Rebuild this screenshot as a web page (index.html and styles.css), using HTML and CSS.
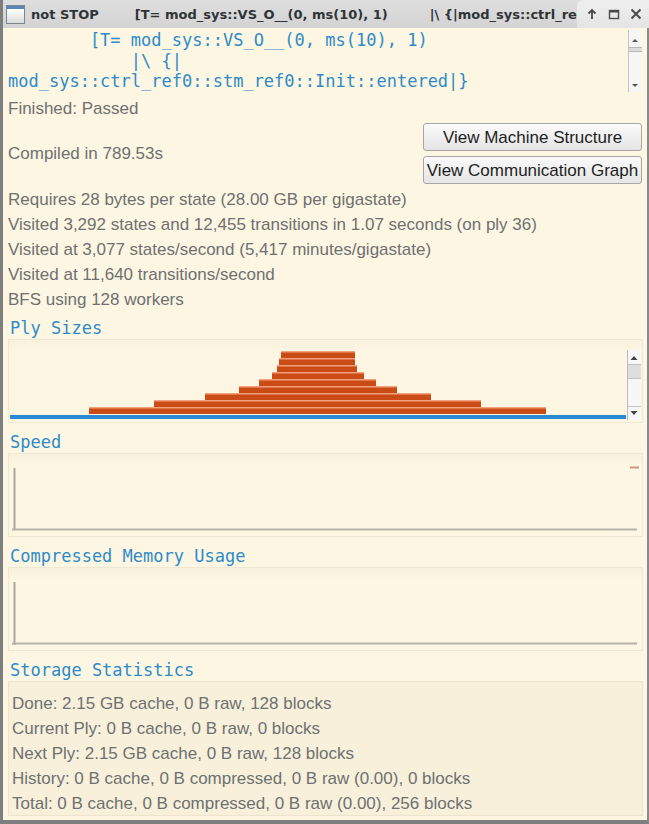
FILE: index.html
```html
<!DOCTYPE html>
<html>
<head>
<meta charset="utf-8">
<link rel="stylesheet" href="styles.css">
</head>
<body>
<div class="window">
  <div class="titlebar">
    <svg class="app-icon" viewBox="0 0 19 19">
      <rect x="0.5" y="0.5" width="18" height="18" fill="#f4f4f4" stroke="#7a8590"/>
      <rect x="1" y="1" width="17" height="3" fill="#5b86b8"/>
      <rect x="1" y="4" width="17" height="14" fill="url(#g)"/>
      <defs><linearGradient id="g" x1="0" y1="0" x2="0" y2="1"><stop offset="0" stop-color="#ffffff"/><stop offset="1" stop-color="#dcdcdc"/></linearGradient></defs>
    </svg>
    <div class="title"><span>not STOP</span><span class="t2">[T= mod_sys::VS_O__(0, ms(10), 1)</span><span class="t3">|\ {|mod_sys::ctrl_ref0::stm_ref0::Init::entered|}</span></div>
    <div class="wm">
      <svg viewBox="0 0 12 12"><path d="M6 2 L6 11 M2.5 5.5 L6 2 L9.5 5.5" fill="none" stroke="#4a4a4a" stroke-width="1.8"/></svg>
      <svg viewBox="0 0 12 12"><rect x="1.5" y="2.5" width="9" height="8" fill="none" stroke="#4a4a4a" stroke-width="1.4"/><rect x="1.5" y="2.5" width="9" height="2" fill="#4a4a4a"/></svg>
      <svg viewBox="0 0 12 12"><path d="M1.5 1.5 L10.5 10.5 M10.5 1.5 L1.5 10.5" fill="none" stroke="#4a4a4a" stroke-width="2"/></svg>
    </div>
  </div>
  <div class="content">
    <div class="statebox">
      <pre class="state">        [T= mod_sys::VS_O__(0, ms(10), 1)
            |\ {|
mod_sys::ctrl_ref0::stm_ref0::Init::entered|}</pre>
      <svg class="vscroll vs-state" viewBox="0 0 14 62">
        <rect x="0" y="0" width="14" height="62" fill="#f6f6f6"/>
        <line x1="0.5" y1="0" x2="0.5" y2="62" stroke="#c4c4c4"/>
        <path d="M4 12 L7 9 L10 12 Z" fill="#555"/>
        <rect x="1" y="17" width="13" height="5" fill="#dcdcdc"/>
        <line x1="1" y1="17.5" x2="14" y2="17.5" stroke="#b8b8b8"/>
        <line x1="1" y1="21.5" x2="14" y2="21.5" stroke="#b8b8b8"/>
        <path d="M4 54 L7 57 L10 54 Z" fill="#555"/>
      </svg>
    </div>
    <div class="line first">Finished: Passed</div>
    <div class="compile-row">
      <div>Compiled in 789.53s</div>
      <div class="buttons">
        <button class="btn">View Machine Structure</button>
        <button class="btn">View Communication Graph</button>
      </div>
    </div>
    <div class="lines">
      <div class="line">Requires 28 bytes per state (28.00 GB per gigastate)</div>
      <div class="line">Visited 3,292 states and 12,455 transitions in 1.07 seconds (on ply 36)</div>
      <div class="line">Visited at 3,077 states/second (5,417 minutes/gigastate)</div>
      <div class="line">Visited at 11,640 transitions/second</div>
      <div class="line">BFS using 128 workers</div>
    </div>

    <h2 class="sect top">Ply Sizes</h2>
    <div class="frame ply">
      <svg class="ply-chart" viewBox="0 0 616 70">
        <g class="bars">
          <rect x="79" y="58" width="457" height="6"/>
          <rect x="144" y="51" width="327" height="6"/>
          <rect x="195" y="44" width="226" height="6"/>
          <rect x="229" y="37" width="158" height="6"/>
          <rect x="249" y="30" width="117" height="6"/>
          <rect x="262" y="23" width="92" height="6"/>
          <rect x="267" y="16" width="80" height="6"/>
          <rect x="269" y="9" width="76" height="6"/>
          <rect x="271" y="2" width="74" height="6"/>
        </g>
        <g class="hl">
          <rect x="79" y="57" width="457" height="1.5"/>
          <rect x="144" y="50" width="327" height="1.5"/>
          <rect x="195" y="43" width="226" height="1.5"/>
          <rect x="229" y="36" width="158" height="1.5"/>
          <rect x="249" y="29" width="117" height="1.5"/>
          <rect x="262" y="22" width="92" height="1.5"/>
          <rect x="267" y="15" width="80" height="1.5"/>
          <rect x="269" y="8" width="76" height="1.5"/>
          <rect x="271" y="1" width="74" height="1.5"/>
        </g>
        <rect x="0" y="65" width="616" height="4" fill="#268bd2"/>
      </svg>
      <svg class="vscroll vs-ply" viewBox="0 0 14 70">
        <rect x="0" y="0" width="14" height="70" fill="#f7f7f7"/>
        <line x1="0.5" y1="0" x2="0.5" y2="70" stroke="#bdbdbd"/>
        <path d="M3.5 10 L7 6 L10.5 10 Z" fill="#444"/>
        <rect x="1" y="14" width="13" height="15" fill="#dedede"/>
        <line x1="1" y1="14.5" x2="14" y2="14.5" stroke="#c4c4c4"/>
        <line x1="1" y1="28.5" x2="14" y2="28.5" stroke="#c4c4c4"/>
        <line x1="1" y1="56.5" x2="14" y2="56.5" stroke="#c4c4c4"/>
        <path d="M3.5 61 L7 65 L10.5 61 Z" fill="#444"/>
      </svg>
    </div>

    <h2 class="sect">Speed</h2>
    <div class="frame graph">
      <svg class="axes" viewBox="0 0 633 82">
        <line x1="5.5" y1="14" x2="5.5" y2="76" stroke="#a9a9a0" stroke-width="2"/>
        <line x1="3" y1="75.5" x2="628" y2="75.5" stroke="#b3b3aa" stroke-width="2"/>
        <line x1="621" y1="13.5" x2="630" y2="13.5" stroke="#c99a7c" stroke-width="2"/>
      </svg>
    </div>

    <h2 class="sect">Compressed Memory Usage</h2>
    <div class="frame graph">
      <svg class="axes" viewBox="0 0 633 82">
        <line x1="5.5" y1="14" x2="5.5" y2="77" stroke="#a9a9a0" stroke-width="2"/>
        <line x1="3" y1="75.5" x2="628" y2="75.5" stroke="#b3b3aa" stroke-width="2"/>
      </svg>
    </div>

    <h2 class="sect">Storage Statistics</h2>
    <div class="frame storage">
      <div class="line">Done: 2.15 GB cache, 0 B raw, 128 blocks</div>
      <div class="line">Current Ply: 0 B cache, 0 B raw, 0 blocks</div>
      <div class="line">Next Ply: 2.15 GB cache, 0 B raw, 128 blocks</div>
      <div class="line">History: 0 B cache, 0 B compressed, 0 B raw (0.00), 0 blocks</div>
      <div class="line">Total: 0 B cache, 0 B compressed, 0 B raw (0.00), 256 blocks</div>
    </div>
  </div>
</div>
</body>
</html>
```

FILE: styles.css
```css
* { box-sizing: border-box; }
html, body { margin: 0; padding: 0; }
body {
  width: 649px;
  height: 824px;
  overflow: hidden;
  background: #fdf6e3;
}
.window {
  width: 649px;
  height: 824px;
  display: flex;
  flex-direction: column;
  border-left: 3px solid #7e7e7e;
  background: #fdf6e3;
}
.titlebar {
  height: 28px;
  flex: none;
  display: flex;
  align-items: center;
  background: linear-gradient(#dedede, #d3d3d3);
  font: bold 13px "DejaVu Sans", sans-serif;
  color: #2e3436;
}
.app-icon {
  width: 19px;
  height: 19px;
  margin-left: 3px;
  flex: none;
}
.title {
  flex: 1;
  display: flex;
  white-space: nowrap;
  overflow: hidden;
  margin-left: 6px;
}
.t2 { margin-left: 36px; }
.t3 { margin-left: 42px; }
.wm {
  width: 72px;
  height: 28px;
  flex: none;
  display: flex;
  align-items: center;
  gap: 10px;
  padding-left: 9px;
  background: linear-gradient(#efefef, #e4e4e4);
  border-top-left-radius: 6px;
}
.wm svg { width: 12px; height: 12px; flex: none; }

.content {
  flex: 1;
  border-right: 2px solid #8a8a8a;
  border-bottom: 4px solid #7e7e7e;
  padding: 0 4px 0 5px;
  font: 17px "Liberation Sans", Arial, sans-serif;
  color: #6d7171;
  overflow: hidden;
}
.statebox {
  margin-top: 2px;
  height: 62px;
  display: flex;
  margin-right: 1px;
}
.state {
  flex: 1;
  margin: 0;
  font: 17px/20.5px "DejaVu Sans Mono", monospace;
  color: #2e8bc9;
  white-space: pre;
  overflow: hidden;
}
.vscroll { flex: none; display: block; }
.vs-state { width: 14px; height: 62px; }
.line { line-height: 25px; white-space: nowrap; }
.line.first { margin-top: 4px; }
.compile-row {
  margin-top: 2px;
  display: flex;
  justify-content: space-between;
  align-items: center;
}
.buttons {
  display: flex;
  flex-direction: column;
  gap: 5px;
  width: 219px;
  margin-right: 1px;
}
.btn {
  height: 28px;
  padding: 1px 0 0;
  border: 1px solid #a6a6a6;
  border-radius: 3px;
  background: linear-gradient(#fafafa, #e5e5e5);
  font: 17px "Liberation Sans", Arial, sans-serif;
  color: #1e1e1e;
}
.lines { margin-top: 3px; }

.sect {
  margin: 8px 0 0;
  padding-left: 2px;
  font: normal 17px/22px "DejaVu Sans Mono", monospace;
  color: #2e8bc9;
}
.sect.top { margin-top: 5px; }
.frame {
  height: 84px;
  border: 1px solid #efe8d3;
  background: linear-gradient(#f7f0dc, #fdf6e3 12px);
}
.ply {
  display: flex;
  align-items: flex-start;
  padding: 10px 0 0 1px;
  gap: 1px;
}
.ply-chart { width: 616px; height: 70px; display: block; flex: none; }
.bars rect { fill: #cb4b16; }
.hl rect { fill: #f3a07c; }
.vs-ply { width: 14px; height: 70px; }
.axes { width: 633px; height: 82px; display: block; }
.storage {
  height: 135px;
  padding: 9px 3px 0;
  background: #f8f0db;
  border-color: #ece4cd;
}
```
